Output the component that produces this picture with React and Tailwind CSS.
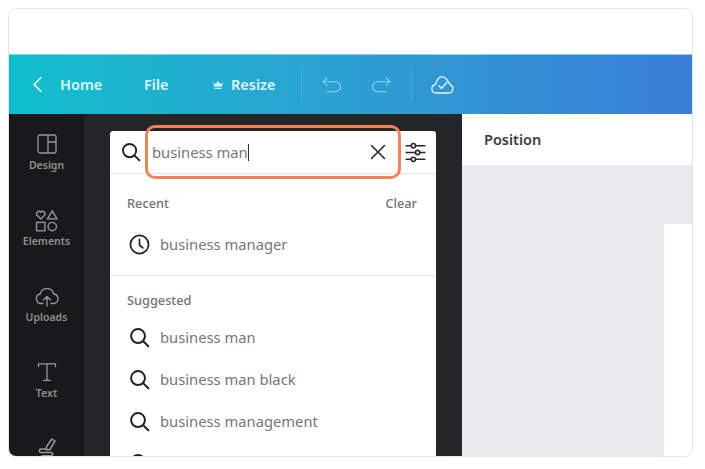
const font = { fontFamily: '"Noto Sans", sans-serif' };

function Search({ className }) {
  return (
    <svg viewBox="0 0 20 20" className={className} fill="none" stroke="#1f2328" strokeWidth="1.9" strokeLinecap="round">
      <circle cx="8.6" cy="8.6" r="6.6" />
      <path d="M13.6 13.6 18.4 18.4" />
    </svg>
  );
}

function NavItem({ label, children }) {
  return (
    <div className="h-[76px] flex flex-col items-center shrink-0">
      <div className="h-[26px] w-full flex items-center justify-center">{children}</div>
      {label && <div className="mt-[1px] text-[10.5px] leading-[14px] font-semibold text-[#8f9092]">{label}</div>}
    </div>
  );
}

const stroke = { fill: "none", stroke: "#97989a", strokeWidth: 1.3 };

function Row({ children, icon }) {
  return (
    <div className="h-[42px] flex items-center pl-[19px] shrink-0">
      {icon}
      <span className="ml-[10px] text-[14.75px] text-[#73777c]">{children}</span>
    </div>
  );
}

export default function App() {
  return (
    <div className="w-[705px] h-[469px] bg-white pt-2 pl-2 overflow-hidden" style={font}>
      <div className="w-[685px] h-[449px] border border-[#e4e5e7] rounded-lg overflow-hidden flex flex-col bg-white">
        <div className="h-[45px] shrink-0 bg-white" />
        <div className="h-[60px] shrink-0 flex items-center text-white font-semibold text-[14.5px] bg-gradient-to-r from-[#0ebfcb] to-[#3a7dd8] border-t border-[#7fd4e8]">
          <svg viewBox="0 0 12 20" className="ml-[23px] w-[11px] h-[17px]" fill="none" stroke="#fff" strokeWidth="1.6" strokeLinecap="round" strokeLinejoin="round">
            <path d="M10 2 2 10l8 8" />
          </svg>
          <span className="ml-[17px] w-[84px] text-[#dff6fa]">Home</span>
          <span className="w-[69px] text-[#dff6fa]">File</span>
          <svg viewBox="0 0 10 10" className="w-[10px] h-[10px]" fill="#cdeef6">
            <path d="M1 6.8 0.3 2.2l2.4 1.7L5 .8l2.3 3.1 2.4-1.7L9 6.8ZM1.4 7.7h7.2v1.3H1.4Z" />
          </svg>
          <span className="ml-[8px] text-[#dff6fa]">Resize</span>
          <div className="ml-[25px] w-px h-[34px] bg-white/15" />
          <svg viewBox="0 0 20 16" className="ml-[20px] w-[20px] h-[16px]" fill="none" stroke="#8fd3ea" strokeWidth="1.1" strokeLinecap="round" strokeLinejoin="round">
            <path d="M5 1 1 4.7l4 3.6M1 4.7h12.5a5 5 0 0 1 0 10H5" />
          </svg>
          <svg viewBox="0 0 20 16" className="ml-[29px] w-[20px] h-[16px]" fill="none" stroke="#8fd3ea" strokeWidth="1.1" strokeLinecap="round" strokeLinejoin="round">
            <path d="M15 1l4 3.7-4 3.6M19 4.7H6.5a5 5 0 0 0 0 10H15" />
          </svg>
          <div className="ml-[20px] w-px h-[34px] bg-white/15" />
          <svg viewBox="0 0 24 18" className="ml-[18px] w-[24px] h-[18px]" fill="none" stroke="#e6f6fb" strokeWidth="1.3" strokeLinecap="round" strokeLinejoin="round">
            <path d="M6 17h12.500a4.300 4.300 0 0 0 1.600-8.300L16.500 3.200A5.200 5.200 0 0 0 7.200 4.500L5.200 8.700A4.200 4.200 0 0 0 6 17Z" />
            <path d="m8.800 9.800 2.700 2.700 5.300-6" />
          </svg>
        </div>

        <div className="flex-1 flex min-h-0">
          <div className="w-[75px] shrink-0 bg-[#18191b] flex flex-col pt-[17px] overflow-hidden">
            <NavItem label="Design">
              <svg viewBox="0 0 20 20" className="w-[20px] h-[20px]" {...stroke}>
                <rect x="1" y="1" width="18" height="18" rx="2" />
                <path d="M11 1v18M11 8h8" />
              </svg>
            </NavItem>
            <NavItem label="Elements">
              <svg viewBox="0 0 22 22" className="w-[23px] h-[23px]" {...stroke}>
                <path d="M5.500 9.500 1.800 5.800a2.300 2.300 0 0 1 3.700-2.700 2.300 2.300 0 0 1 3.700 2.700Z" />
                <path d="M16.500 1.800 21 9.500h-9Z" />
                <rect x="1.500" y="12.800" width="8" height="8" />
                <circle cx="16.500" cy="16.800" r="4" />
              </svg>
            </NavItem>
            <NavItem label="Uploads">
              <svg viewBox="0 0 24 22" className="w-[24px] h-[22px]" {...stroke} strokeLinecap="round" strokeLinejoin="round">
                <path d="M8 18.500H6a4.800 4.800 0 0 1-.8-9.500 6.900 6.900 0 0 1 13.500 0 4.800 4.800 0 0 1 .3 9.500H16" />
                <path d="M12 21v-9M8.500 15 12 11.500l3.500 3.500" />
              </svg>
            </NavItem>
            <NavItem label="Text">
              <svg viewBox="0 0 20 20" className="w-[20px] h-[20px]" {...stroke} strokeLinecap="round">
                <path d="M1.500 4.500V1.800h17v2.700M10 1.800v16.500M6.500 18.300h7" />
              </svg>
            </NavItem>
            <NavItem>
              <svg viewBox="0 0 20 22" className="w-[20px] h-[22px]" {...stroke} strokeWidth="1.5" strokeLinecap="round" strokeLinejoin="round">
                <path d="M9.500 9.500 15 2l3 2-5 8.500-3.500.5ZM9 12H4a1.700 1.700 0 0 0 0 3.400h10a1.700 1.700 0 0 1 0 3.400H5" />
              </svg>
            </NavItem>
          </div>

          <div className="w-[378px] shrink-0 bg-[#252627] pt-[17px] pl-[26px] overflow-hidden">
            <div className="relative w-[326px] bg-white rounded-t-[3px] flex flex-col">
              <div className="h-[43px] shrink-0 flex items-center border-b border-[#e6e7e9]">
                <Search className="ml-[11px] w-[20px] h-[20px]" />
                <div className="ml-[11px] flex items-center text-[14.75px] text-[#74777c]">
                  <span>business man</span>
                  <span className="w-px h-[17px] bg-[#2b2d30]" />
                </div>
                <svg viewBox="0 0 16 16" className="ml-auto w-[16px] h-[16px]" fill="none" stroke="#27292c" strokeWidth="1.600" strokeLinecap="round">
                  <path d="M1.500 1.500 14.500 14.500M14.500 1.500 1.500 14.500" />
                </svg>
                <svg viewBox="0 0 20 20" className="ml-[19px] mr-[10px] w-[21px] h-[21px]" fill="none" stroke="#27292c" strokeWidth="1.500">
                  <path d="M0.500 3.500h5.500M10 3.500h9.500M0.500 10h9.500M14 10h5.500M0.500 16.500h5.500M10 16.500h9.500" />
                  <circle cx="8" cy="3.500" r="2" />
                  <circle cx="12" cy="10" r="2" />
                  <circle cx="8" cy="16.500" r="2" />
                </svg>
              </div>

              <div className="absolute left-[35px] top-[-6px] w-[256px] h-[54px] border-[3px] border-[#f08356] rounded-[10px]" />

              <div className="pt-[22px] pb-[10px] border-b border-[#e6e7e9]">
                <div className="flex justify-between pl-[17px] pr-[19px] text-[12.75px] leading-[14px] font-medium text-[#6f7378]">
                  <span>Recent</span>
                  <span>Clear</span>
                </div>
                <div className="mt-[13px]">
                  <Row
                    icon={
                      <svg viewBox="0 0 22 22" className="w-[21px] h-[21px]" fill="none" stroke="#1f2328" strokeWidth="1.800" strokeLinecap="round" strokeLinejoin="round">
                        <circle cx="11" cy="11" r="9.500" />
                        <path d="M11 5.500V11.500l3.500 3" />
                      </svg>
                    }
                  >
                    business manager
                  </Row>
                </div>
              </div>

              <div className="pt-[17px] pb-[9px] pl-[17px] text-[12.75px] leading-[14px] font-medium text-[#6f7378]">Suggested</div>
              {["business man", "business man black", "business management", ""].map((t) => (
                <Row key={t} icon={<Search className="w-[21px] h-[21px]" />}>
                  {t}
                </Row>
              ))}
            </div>
          </div>

          <div className="flex-1 min-w-0 flex flex-col bg-white">
            <div className="h-[51px] shrink-0 flex items-center pl-[22px] text-[14.5px] font-semibold text-[#3a3d42]">Position</div>
            <div className="flex-1 bg-[#e9eaed] pt-[59px] pl-[202px]">
              <div className="h-full bg-white" />
            </div>
          </div>
        </div>
      </div>
    </div>
  );
}
